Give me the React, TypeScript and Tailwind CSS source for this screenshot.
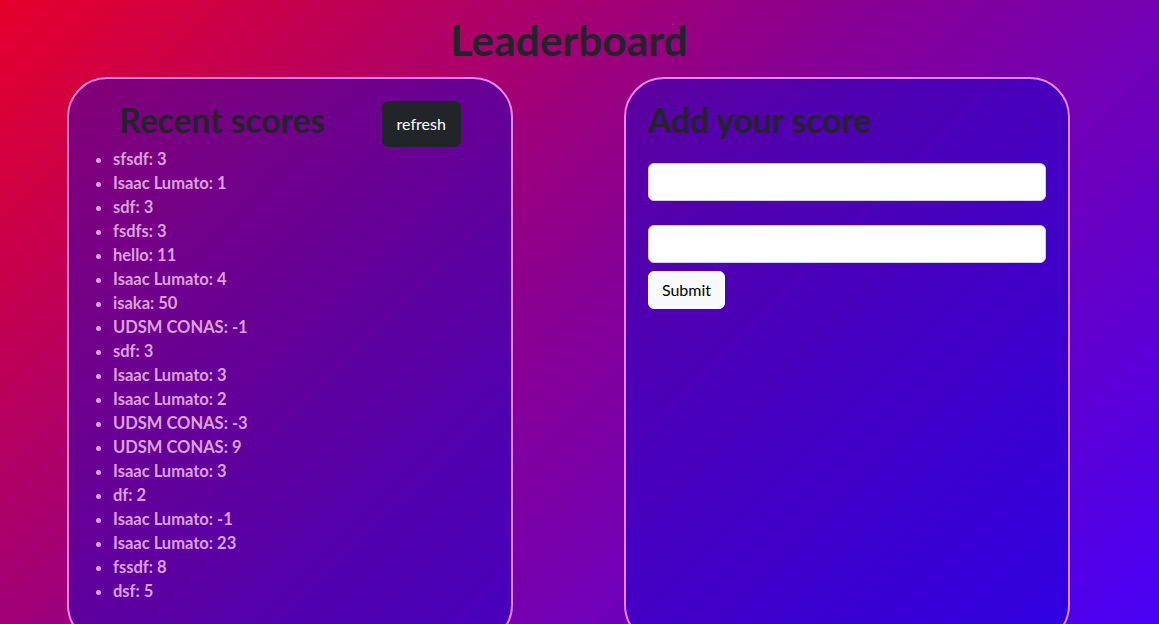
import { useState } from "react";

const initialScores = [
  { user: "sfsdf", score: 3 },
  { user: "Isaac Lumato", score: 1 },
  { user: "sdf", score: 3 },
  { user: "fsdfs", score: 3 },
  { user: "hello", score: 11 },
  { user: "Isaac Lumato", score: 4 },
  { user: "isaka", score: 50 },
  { user: "UDSM CONAS", score: -1 },
  { user: "sdf", score: 3 },
  { user: "Isaac Lumato", score: 3 },
  { user: "Isaac Lumato", score: 2 },
  { user: "UDSM CONAS", score: -3 },
  { user: "UDSM CONAS", score: 9 },
  { user: "Isaac Lumato", score: 3 },
  { user: "df", score: 2 },
  { user: "Isaac Lumato", score: -1 },
  { user: "Isaac Lumato", score: 23 },
  { user: "fssdf", score: 8 },
  { user: "dsf", score: 5 },
];

const App = () => {
  //Scores list and form fields
  const [scores] = useState(initialScores);
  const [name, setName] = useState("");
  const [score, setScore] = useState("");

  return (
    <div
      className="h-[624px] overflow-hidden bg-[linear-gradient(135deg,#e6002a_0%,#8a0090_47%,#4800f5_100%)] text-[#212529]"
      style={{ fontFamily: "Lato, 'Open Sans', sans-serif" }}
    >
      <div className="w-[1138px]">
        <h1 className="pt-[16px] text-center text-[42.5px] font-bold leading-[48px]">
          Leaderboard
        </h1>
        <div className="mt-[13px] flex gap-[111px] pl-[67px]">
          {/* Recent scores panel */}
          <div className="w-[446px] rounded-[40px] border-2 border-[#ee82ee] bg-[rgba(0,0,210,0.38)] p-[22px] pb-[40px]">
            <div className="flex items-start justify-around">
              <h2 className="mb-2 text-[33.5px] font-bold leading-[38px]">
                Recent scores
              </h2>
              <button className="h-[46px] w-[79px] rounded-md bg-[#212529] text-base text-white">
                refresh
              </button>
            </div>
            <ul className="list-disc pl-[22px] text-[16.5px] font-bold leading-6 text-[#dda0dd]">
              {scores.map((s, index) => (
                <li key={index}>
                  {s.user}: {s.score}
                </li>
              ))}
            </ul>
          </div>

          {/* Add your score panel */}
          <div className="w-[446px] rounded-[40px] border-2 border-[#ee82ee] bg-[rgba(0,0,210,0.38)] p-[22px]">
            <h2 className="mb-2 text-[33.5px] font-bold leading-[38px]">
              Add your score
            </h2>
            <form
              className="mt-6 flex flex-col"
              onSubmit={(e) => e.preventDefault()}
            >
              <input
                className="h-[38px] w-full rounded-md border border-[#ced4da] bg-white px-3 text-base"
                value={name}
                onChange={(e) => setName(e.currentTarget.value)}
              />
              <input
                className="mt-6 h-[38px] w-full rounded-md border border-[#ced4da] bg-white px-3 text-base"
                value={score}
                onChange={(e) => setScore(e.currentTarget.value)}
              />
              <button
                type="submit"
                className="mt-2 h-[38px] w-[77px] rounded-md border border-[#f8f9fa] bg-[#f8f9fa] text-base text-black"
              >
                Submit
              </button>
            </form>
          </div>
        </div>
      </div>
    </div>
  );
};

export default App;
